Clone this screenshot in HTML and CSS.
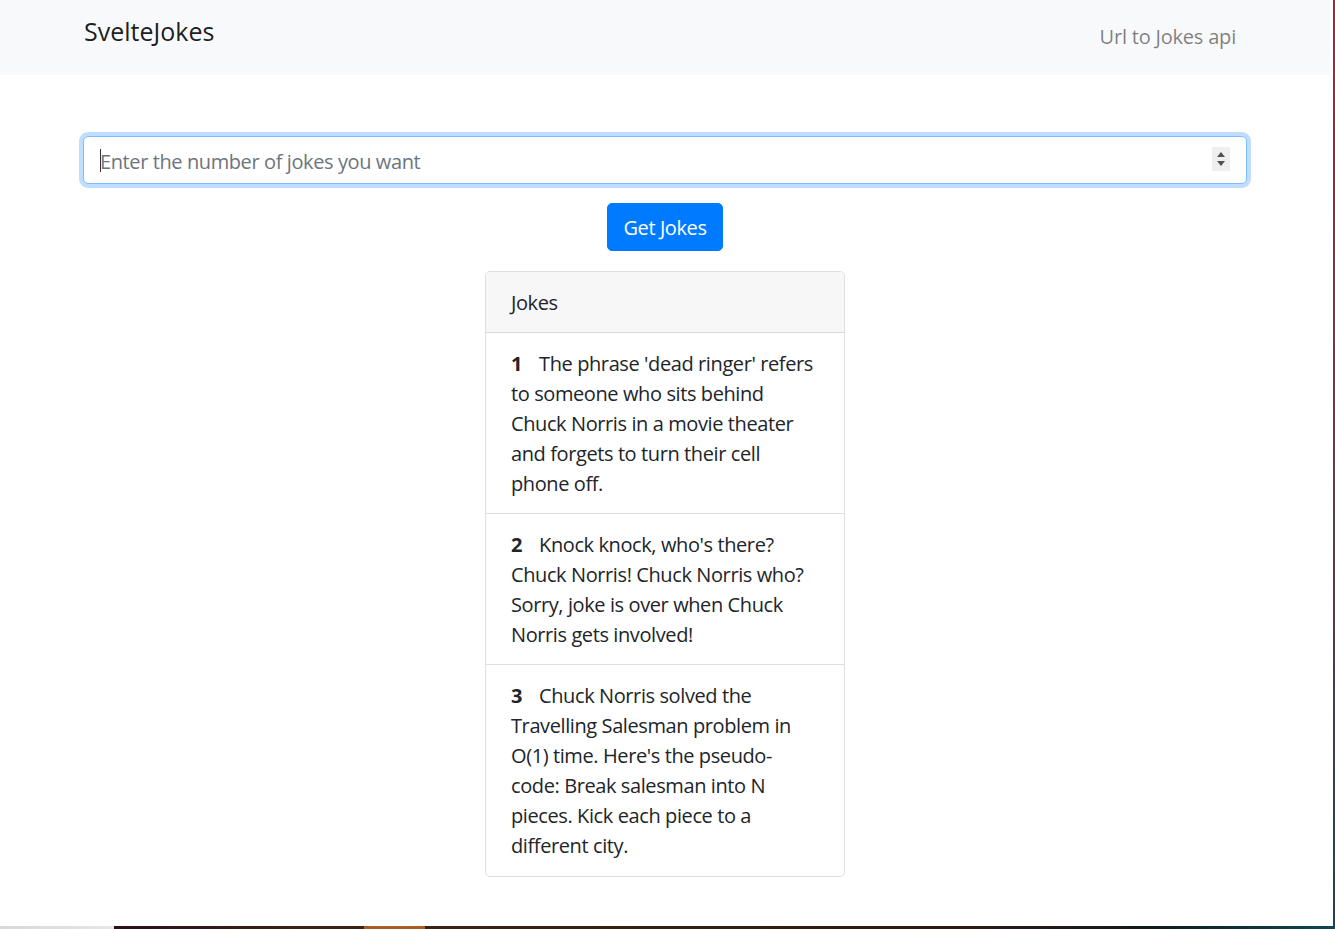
FILE: index.html
```html
<!DOCTYPE html>
<html lang="en">
<head>
<meta charset="utf-8">
<title>SvelteJokes</title>
<link rel="stylesheet" href="styles.css">
</head>
<body>
<div class="page">
<nav class="navbar">
  <div class="container nav-inner">
    <a class="brand" href="#">SvelteJokes</a>
    <a class="nav-link" href="#">Url to Jokes api</a>
  </div>
</nav>
<main class="container main">
  <div class="input-wrap">
    <input class="form-control" type="text" placeholder="Enter the number of jokes you want">
    <span class="caret"></span>
    <span class="spinner">
      <svg width="18" height="24" viewBox="0 0 18 24"><path d="M5 10 L9 5 L13 10 Z" fill="#505050"/><path d="M5 14 L9 19 L13 14 Z" fill="#505050"/></svg>
    </span>
  </div>
  <button class="btn">Get Jokes</button>
  <div class="card">
    <div class="card-header">Jokes</div>
    <ul class="list">
      <li class="item"><strong class="num">1</strong>The phrase 'dead ringer' refers to someone who sits behind Chuck Norris in a movie theater and forgets to turn their cell phone off.</li>
      <li class="item"><strong class="num">2</strong>Knock knock, who's there? Chuck Norris! Chuck Norris who? Sorry, joke is over when Chuck Norris gets involved!</li>
      <li class="item"><strong class="num">3</strong>Chuck Norris solved the Travelling Salesman problem in O(1) time. Here's the pseudo-code: Break salesman into N pieces. Kick each piece to a different city.</li>
    </ul>
  </div>
</main>
</div>
</body>
</html>
```
FILE: styles.css
```css
html {
  min-height: 100%;
  background:
    linear-gradient(to right, #d8d8d8 0, #e6e6e6 114px, #2c0f1c 114px, #3a2214 300px, #3a2214 364px, #a65e22 364px, #a65e22 425px, #3a2214 425px, #2e1a12 950px, #121a1c 1150px, #0d4a50 1335px) 0 100% / 100% 3px no-repeat,
    linear-gradient(to bottom, #b81c3a, #8a2a4a 45%, #0e4a52);
}
body {
  margin: 0;
  width: 1333px;
  height: 926px;
  overflow: hidden;
  background: #fff;
  font-family: "Open Sans", "Noto Sans", sans-serif;
  font-size: 20px;
  line-height: 30px;
  letter-spacing: -0.4px;
  color: #212529;
}
.page {
  width: 1330px;
}
.container {
  width: 1164px;
  margin: 0 auto;
  box-sizing: border-box;
}
.navbar {
  background: #f8f9fa;
  height: 75px;
}
.nav-inner {
  display: flex;
  justify-content: space-between;
  align-items: flex-start;
  padding-left: 1px;
}
.brand {
  margin-top: 13px;
  font-size: 25px;
  line-height: 37px;
  letter-spacing: 0;
  color: rgba(0, 0, 0, .9);
  text-decoration: none;
}
.nav-link {
  margin-top: 22px;
  margin-right: 11px;
  letter-spacing: -0.2px;
  color: rgba(0, 0, 0, .5);
  text-decoration: none;
}
.main {
  display: flex;
  flex-direction: column;
  align-items: center;
  padding-top: 61px;
}
.input-wrap {
  position: relative;
  width: 100%;
}
.form-control {
  display: block;
  width: 100%;
  height: 48px;
  box-sizing: border-box;
  padding: 8px 16px 6px;
  border: 1px solid #80bdff;
  border-radius: 5px;
  box-shadow: 0 0 0 4px rgba(0, 123, 255, .25);
  font: inherit;
  letter-spacing: -0.4px;
  color: #495057;
  outline: none;
}
.form-control::placeholder {
  color: #6c757d;
}
.caret {
  position: absolute;
  left: 17px;
  top: 13px;
  width: 1px;
  height: 23px;
  background: #333;
}
.spinner {
  position: absolute;
  right: 17px;
  top: 11px;
  width: 18px;
  height: 24px;
  background: #efefef;
  display: flex;
}
.btn {
  margin-top: 19px;
  height: 48px;
  padding: 1px 15px 0;
  border: 1px solid #007bff;
  border-radius: 5px;
  background: #007bff;
  color: #fff;
  font: inherit;
  letter-spacing: -0.4px;
}
.card {
  margin-top: 20px;
  width: 360px;
  border: 1px solid rgba(0, 0, 0, .125);
  border-radius: 5px;
  box-sizing: border-box;
}
.card-header {
  padding: 16px 25px 14px;
  background: #f7f7f7;
  border-bottom: 1px solid rgba(0, 0, 0, .125);
  border-radius: 4px 4px 0 0;
}
.list {
  list-style: none;
  margin: 0;
  padding: 0;
}
.item {
  padding: 16px 25px 14px;
}
.item:last-child {
  padding-bottom: 15px;
}
.item + .item {
  border-top: 1px solid rgba(0, 0, 0, .125);
}
.num {
  display: inline-block;
  font-weight: 700;
  margin-right: 17px;
}
```
